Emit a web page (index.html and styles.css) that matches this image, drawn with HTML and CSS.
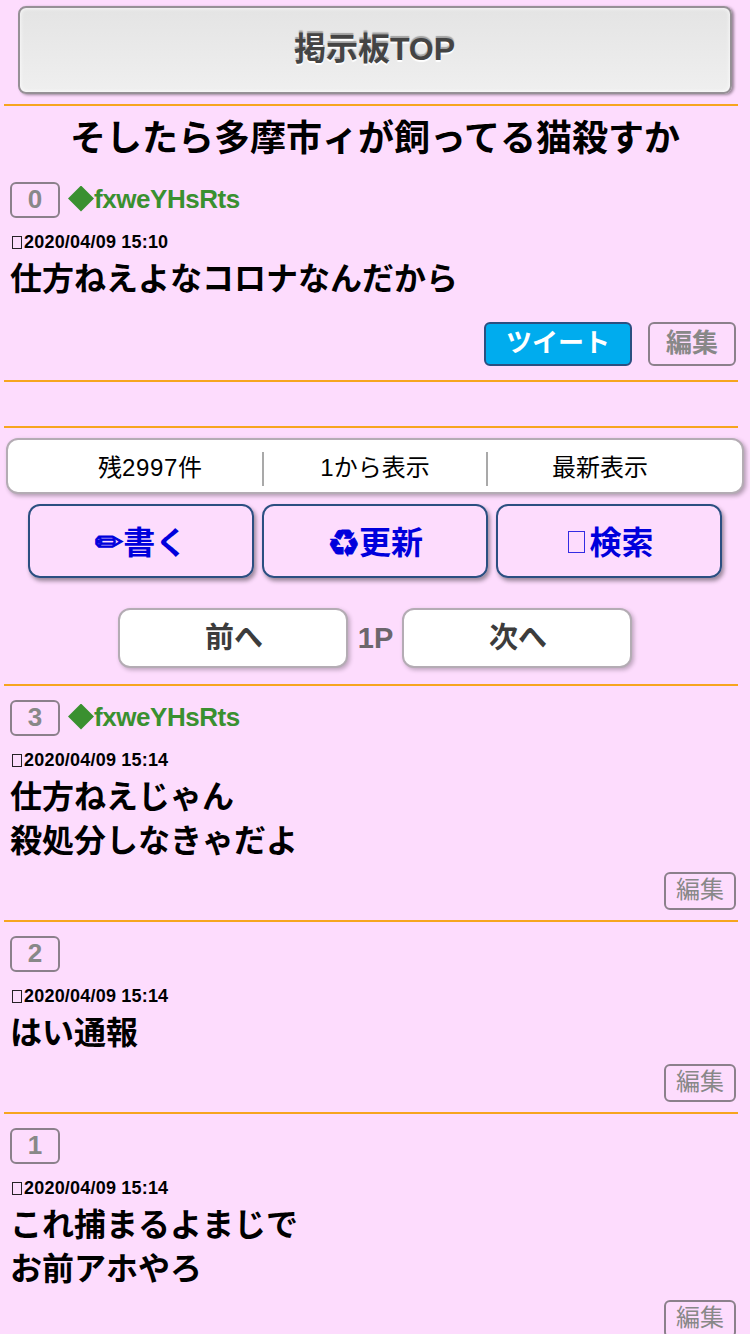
FILE: index.html
```html
<!DOCTYPE html>
<html lang="ja">
<head>
<meta charset="utf-8">
<title>そしたら多摩市ィが飼ってる猫殺すか</title>
<link rel="stylesheet" href="styles.css">
</head>
<body>
<header class="top"><a class="top-link">掲示板TOP</a></header>
<hr class="rule">
<h1 class="title">そしたら多摩市ィが飼ってる猫殺すか</h1>
<article class="post first">
  <div class="post-head"><span class="num">0</span><span class="name"><i class="diamond"></i>fxweYHsRts</span></div>
  <div class="date"><i class="box"></i>2020/04/09 15:10</div>
  <div class="text">仕方ねえよなコロナなんだから</div>
  <div class="actions"><a class="btn tweet">ツイート</a><a class="btn edit-main">編集</a></div>
</article>
<hr class="rule">
<hr class="rule spaced">
<nav class="tabs"><a class="tab">残<span class="count">2997</span>件</a><a class="tab">1から表示</a><a class="tab">最新表示</a></nav>
<nav class="tools">
  <a class="tool"><span class="glyph pencil">✏</span>書く</a>
  <a class="tool"><span class="glyph recycle">♻</span>更新</a>
  <a class="tool"><i class="box large"></i>検索</a>
</nav>
<nav class="pager"><a class="page-btn">前へ</a><span class="page">1P</span><a class="page-btn">次へ</a></nav>
<hr class="rule">
<article class="post">
  <div class="post-head"><span class="num">3</span><span class="name"><i class="diamond"></i>fxweYHsRts</span></div>
  <div class="date"><i class="box"></i>2020/04/09 15:14</div>
  <div class="text">仕方ねえじゃん<br>殺処分しなきゃだよ</div>
  <div class="actions"><a class="btn edit">編集</a></div>
</article>
<hr class="rule">
<article class="post">
  <div class="post-head"><span class="num">2</span></div>
  <div class="date"><i class="box"></i>2020/04/09 15:14</div>
  <div class="text">はい通報</div>
  <div class="actions"><a class="btn edit">編集</a></div>
</article>
<hr class="rule">
<article class="post">
  <div class="post-head"><span class="num">1</span></div>
  <div class="date"><i class="box"></i>2020/04/09 15:14</div>
  <div class="text">これ捕まるよまじで<br>お前アホやろ</div>
  <div class="actions"><a class="btn edit">編集</a></div>
</article>
</body>
</html>
```

FILE: styles.css
```css
* { box-sizing: border-box; }
html { overflow: hidden; }
body {
  margin: 0;
  height: 1334px;
  overflow: hidden;
  background: #fddcfd;
  color: #000;
  font-family: "Liberation Sans", "Noto Sans CJK JP", sans-serif;
}
.rule { height: 2px; margin: 0 12px 0 4px; border: 0; background: #f6a51f; }
.spaced { margin-top: 44px; }

.top { padding: 6px 18px 10px; }
.top-link {
  display: flex;
  align-items: center;
  justify-content: center;
  height: 88px;
  padding: 0 1px 8px 0;
  border: 2px solid #969096;
  border-radius: 8px;
  background: linear-gradient(#e4e4e4, #efefef);
  box-shadow: 2px 1px 3px rgba(0, 0, 0, .4), inset 0 0 4px #fff;
  color: #444;
  font-size: 32px;
  font-weight: bold;
  text-shadow: 0 2px 1px #fff, 0 -2px 1px rgba(0, 0, 0, .3);
}
.title { margin: 0; height: 64px; padding-top: 1px; line-height: 64px; font-size: 36px; text-align: center; }

.post { padding: 14px 14px 10px 10px; }
.first { padding: 12px 14px 14px 10px; }
.post-head { display: flex; height: 36px; }
.num {
  width: 50px;
  height: 36px;
  border: 2px solid #8b808b;
  border-radius: 6px;
  color: #888;
  font-size: 26px;
  font-weight: bold;
  line-height: 31px;
  text-align: center;
}
.name {
  display: flex;
  align-items: center;
  margin-left: 8px;
  color: #3a9030;
  font-size: 26px;
  font-weight: bold;
  letter-spacing: -.45px;
  line-height: 34px;
  height: 34px;
}
.diamond { width: 26px; height: 26px; margin-top: -1px; background: currentColor; clip-path: polygon(50% 0, 100% 50%, 50% 100%, 0 50%); }
.date {
  display: flex;
  align-items: center;
  height: 39px;
  padding-top: 9px;
  font-size: 18px;
  font-weight: bold;
  letter-spacing: .2px;
}
.box { width: 10px; height: 13px; margin: 0 2px; border: 1px solid; opacity: .85; }
.box.large { width: 17px; height: 22px; margin: 3px 4px 0 4px; opacity: .8; }
.text { font-size: 32px; font-weight: bold; line-height: 44px; }
.actions { display: flex; justify-content: flex-end; gap: 16px; padding-top: 9px; }
.first .actions { padding-top: 21px; }
.btn {
  border: 2px solid #8b808b;
  border-radius: 6px;
  color: #888;
  text-align: center;
}
.tweet, .edit-main { height: 44px; font-size: 26px; font-weight: bold; line-height: 39px; }
.tweet { width: 148px; background: #00acee; border-color: #2b4f81; color: #fff; }
.edit-main { width: 88px; }
.edit { width: 72px; height: 38px; font-size: 24px; line-height: 32px; }

.tabs {
  display: grid;
  grid-template-columns: 225px 224px 224px;
  justify-content: center;
  margin: 10px 6px 0;
  height: 56px;
  padding: 12px 0 0 1px;
  border: 2px solid #b4acb4;
  border-radius: 12px;
  background: #fff;
  box-shadow: 2px 2px 4px rgba(0, 0, 0, .3);
}
.tab {
  height: 34px;
  border-right: 2px solid #a9a9a9;
  font-size: 24px;
  line-height: 32px;
  text-align: center;
}
.tab:last-child { border-right: 0; }
.tab:first-child { padding-right: 1px; }
.count { letter-spacing: .7px; }
.tools { display: flex; justify-content: center; gap: 8px; padding-top: 10px; }
.tool {
  display: flex;
  align-items: center;
  justify-content: center;
  width: 226px;
  height: 74px;
  padding-bottom: 2px;
  border: 2px solid #2b4f81;
  border-radius: 12px;
  box-shadow: 2px 3px 4px rgba(0, 0, 0, .4);
  color: #0000dc;
  font-size: 32px;
  font-weight: bold;
}
.glyph { font-family: "DejaVu Sans", sans-serif; -webkit-text-stroke: 1px currentColor; }
.pencil { font-size: 34px; margin-top: 4px; }
.recycle { font-size: 37px; margin-top: 6px; margin-right: -1px; }
.pager { display: flex; align-items: center; justify-content: center; padding: 30px 0 16px; }
.page-btn {
  width: 230px;
  height: 60px;
  padding-left: 2px;
  border: 2px solid #b4acb4;
  border-radius: 12px;
  background: #fff;
  box-shadow: 2px 2px 4px rgba(0, 0, 0, .25);
  color: #3c3c3c;
  font-size: 29px;
  font-weight: bold;
  line-height: 57px;
  text-align: center;
}
.page { width: 54px; padding-left: 1px; color: #6c666c; font-size: 29px; font-weight: bold; text-align: center; }
```
